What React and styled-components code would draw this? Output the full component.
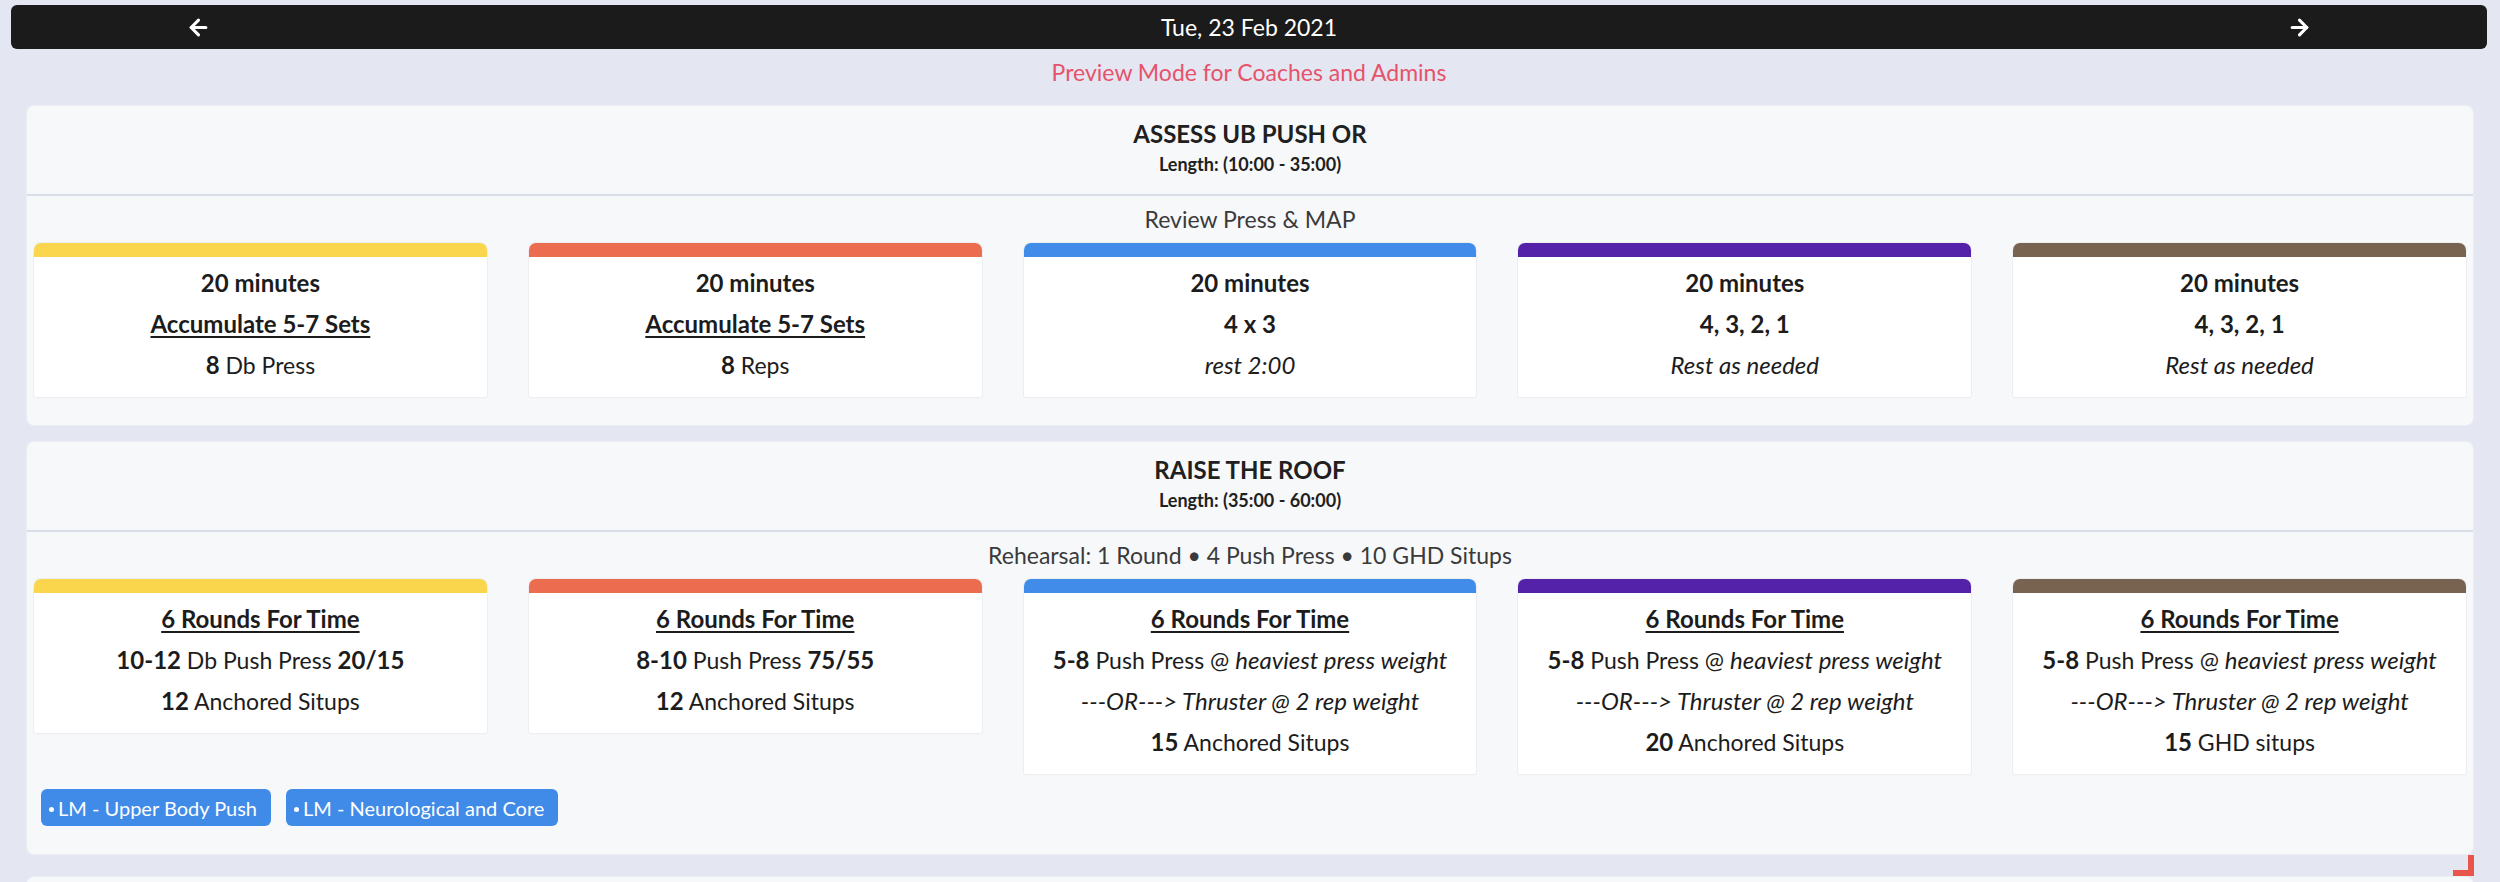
import React from 'react';
import styled, { createGlobalStyle } from 'styled-components';
import { ArrowLeft, ArrowRight } from 'lucide-react';

const GlobalStyle = createGlobalStyle`
  body {
    margin: 0;
    background: #e4e6f2;
    font-family: Lato, "Noto Sans", sans-serif;
    color: #1c1c1c;
  }
`;

const Page = styled.div`
  padding: 5px 13px 0 11px;
`;

const TopBar = styled.div`
  height: 44px;
  background: #1b1b1b;
  border-radius: 6px;
  display: flex;
  align-items: center;
  justify-content: space-between;
  padding: 0 175px;
  color: #fff;
`;

const DateLabel = styled.span`
  font-size: 23px;
  line-height: 44px;
`;

const NavButton = styled.span`
  display: flex;
  align-items: center;
  color: #fff;
`;

const Preview = styled.div`
  margin-top: 8px;
  text-align: center;
  line-height: 30px;
  font-size: 23px;
  color: #e6536b;
`;

const Blocks = styled.div`
  margin: 18px 26px 0 26px;
  display: flex;
  flex-direction: column;
`;

const Block = styled.section`
  background: #f7f8fa;
  border: 1px solid #eceef3;
  border-radius: 8px;
  padding-bottom: 28px;
  margin-bottom: ${(p) => p.$gap || 0}px;
  min-height: ${(p) => p.$minHeight || 0}px;
`;

const BlockHeader = styled.header`
  padding: 14px 0 18px;
  text-align: center;
  border-bottom: 2px solid #d9dde7;
`;

const BlockTitle = styled.h3`
  margin: 0;
  font-size: 24px;
  line-height: 28px;
  font-weight: 700;
  color: #202020;
`;

const BlockLength = styled.div`
  margin-top: 4px;
  font-size: 18px;
  line-height: 24px;
  font-weight: 700;
  color: #202020;
`;

const Subtitle = styled.div`
  text-align: center;
  font-size: 23px;
  line-height: 30px;
  padding-top: 8px;
  color: #3a3a3a;
`;

const CardRow = styled.div`
  margin-top: 9px;
  padding: 0 7px;
  display: grid;
  grid-template-columns: repeat(5, 1fr);
  column-gap: 42px;
  align-items: start;
`;

const Card = styled.div`
  background: #fff;
  border-radius: 7px 7px 2px 2px;
  box-shadow: 0 0 0 1px #eceef2, 0 1px 2px rgba(0, 0, 0, 0.04);
  overflow: hidden;
`;

const CardBar = styled.div`
  height: 14px;
  background: ${(p) => p.$color};
`;

const CardBody = styled.div`
  padding: 11px 6px 6px;
  text-align: center;
`;

const Line = styled.p`
  margin: 0 0 11px;
  font-size: ${(p) => (p.$bold || p.$italic ? 24 : 23)}px;
  line-height: 30px;
  white-space: nowrap;
  font-weight: ${(p) => (p.$bold ? 700 : 400)};
  font-style: ${(p) => (p.$italic ? 'italic' : 'normal')};
  text-decoration: ${(p) => (p.$underline ? 'underline' : 'none')};
  text-underline-offset: 3px;
  text-decoration-thickness: 2px;

  strong,
  em {
    font-size: 24px;
  }
`;

const TagRow = styled.div`
  margin-top: 15px;
  padding-left: 14px;
  display: flex;
  gap: 15px;
`;

const Tag = styled.span`
  height: 37px;
  display: flex;
  align-items: center;
  padding: 0 14px 0 8px;
  background: #418be8;
  border-radius: 6px;
  color: #fff;
  font-size: 20px;
`;

const Dot = styled.span`
  width: 5px;
  height: 5px;
  border-radius: 50%;
  background: #fff;
  margin: 4px 4px 0 0;
`;

const HandleRow = styled.div`
  height: 21px;
  display: flex;
  justify-content: flex-end;
`;

const CornerHandle = styled.span`
  width: 21px;
  height: 21px;
  box-sizing: border-box;
  border-right: 6px solid #e8564b;
  border-bottom: 6px solid #e8564b;
`;

const colors = ['#f9d64c', '#ec6c4f', '#418ce9', '#5421a9', '#786351'];

const blockOne = [
  [{ t: '20 minutes', b: true }, { t: 'Accumulate 5-7 Sets', b: true, u: true }, [['8', 'b'], [' Db Press']]],
  [{ t: '20 minutes', b: true }, { t: 'Accumulate 5-7 Sets', b: true, u: true }, [['8', 'b'], [' Reps']]],
  [{ t: '20 minutes', b: true }, { t: '4 x 3', b: true }, { t: 'rest 2:00', i: true }],
  [{ t: '20 minutes', b: true }, { t: '4, 3, 2, 1', b: true }, { t: 'Rest as needed', i: true }],
  [{ t: '20 minutes', b: true }, { t: '4, 3, 2, 1', b: true }, { t: 'Rest as needed', i: true }],
];

const rounds = { t: '6 Rounds For Time', b: true, u: true };
const heavy = [['5-8', 'b'], [' Push Press @ '], ['heaviest press weight', 'i']];
const orLine = { t: '---OR---> Thruster @ 2 rep weight', i: true };

const blockTwo = [
  [rounds, [['10-12', 'b'], [' Db Push Press '], ['20/15', 'b']], [['12', 'b'], [' Anchored Situps']]],
  [rounds, [['8-10', 'b'], [' Push Press '], ['75/55', 'b']], [['12', 'b'], [' Anchored Situps']]],
  [rounds, heavy, orLine, [['15', 'b'], [' Anchored Situps']]],
  [rounds, heavy, orLine, [['20', 'b'], [' Anchored Situps']]],
  [rounds, heavy, orLine, [['15', 'b'], [' GHD situps']]],
];

const renderLine = (line, idx) => {
  if (Array.isArray(line)) {
    return (
      <Line key={idx}>
        {line.map(([text, style], j) =>
          style === 'b' ? <strong key={j}>{text}</strong> : style === 'i' ? <em key={j}>{text}</em> : <span key={j}>{text}</span>
        )}
      </Line>
    );
  }
  return (
    <Line key={idx} $bold={line.b} $italic={line.i} $underline={line.u}>
      {line.t}
    </Line>
  );
};

const WorkoutBlock = ({ title, length, subtitle, cards, tags, gap }) => (
  <Block $gap={gap}>
    <BlockHeader>
      <BlockTitle>{title}</BlockTitle>
      <BlockLength>Length: {length}</BlockLength>
    </BlockHeader>
    <Subtitle>{subtitle}</Subtitle>
    <CardRow>
      {cards.map((lines, i) => (
        <Card key={i}>
          <CardBar $color={colors[i]} />
          <CardBody>{lines.map(renderLine)}</CardBody>
        </Card>
      ))}
    </CardRow>
    {tags && (
      <TagRow>
        {tags.map((t) => (
          <Tag key={t}>
            <Dot />
            {t}
          </Tag>
        ))}
      </TagRow>
    )}
  </Block>
);

export default function App() {
  return (
    <>
      <GlobalStyle />
      <Page>
        <TopBar>
          <NavButton>
            <ArrowLeft size={25} strokeWidth={3} />
          </NavButton>
          <DateLabel>Tue, 23 Feb 2021</DateLabel>
          <NavButton>
            <ArrowRight size={25} strokeWidth={3} />
          </NavButton>
        </TopBar>
        <Preview>Preview Mode for Coaches and Admins</Preview>
      </Page>
      <Blocks>
        <WorkoutBlock
          title="ASSESS UB PUSH OR"
          length="(10:00 - 35:00)"
          subtitle="Review Press & MAP"
          cards={blockOne}
          gap={15}
        />
        <WorkoutBlock
          title="RAISE THE ROOF"
          length="(35:00 - 60:00)"
          subtitle="Rehearsal: 1 Round • 4 Push Press • 10 GHD Situps"
          cards={blockTwo}
          tags={['LM - Upper Body Push', 'LM - Neurological and Core']}
        />
        <HandleRow>
          <CornerHandle />
        </HandleRow>
        <Block $minHeight={200} />
      </Blocks>
    </>
  );
}
